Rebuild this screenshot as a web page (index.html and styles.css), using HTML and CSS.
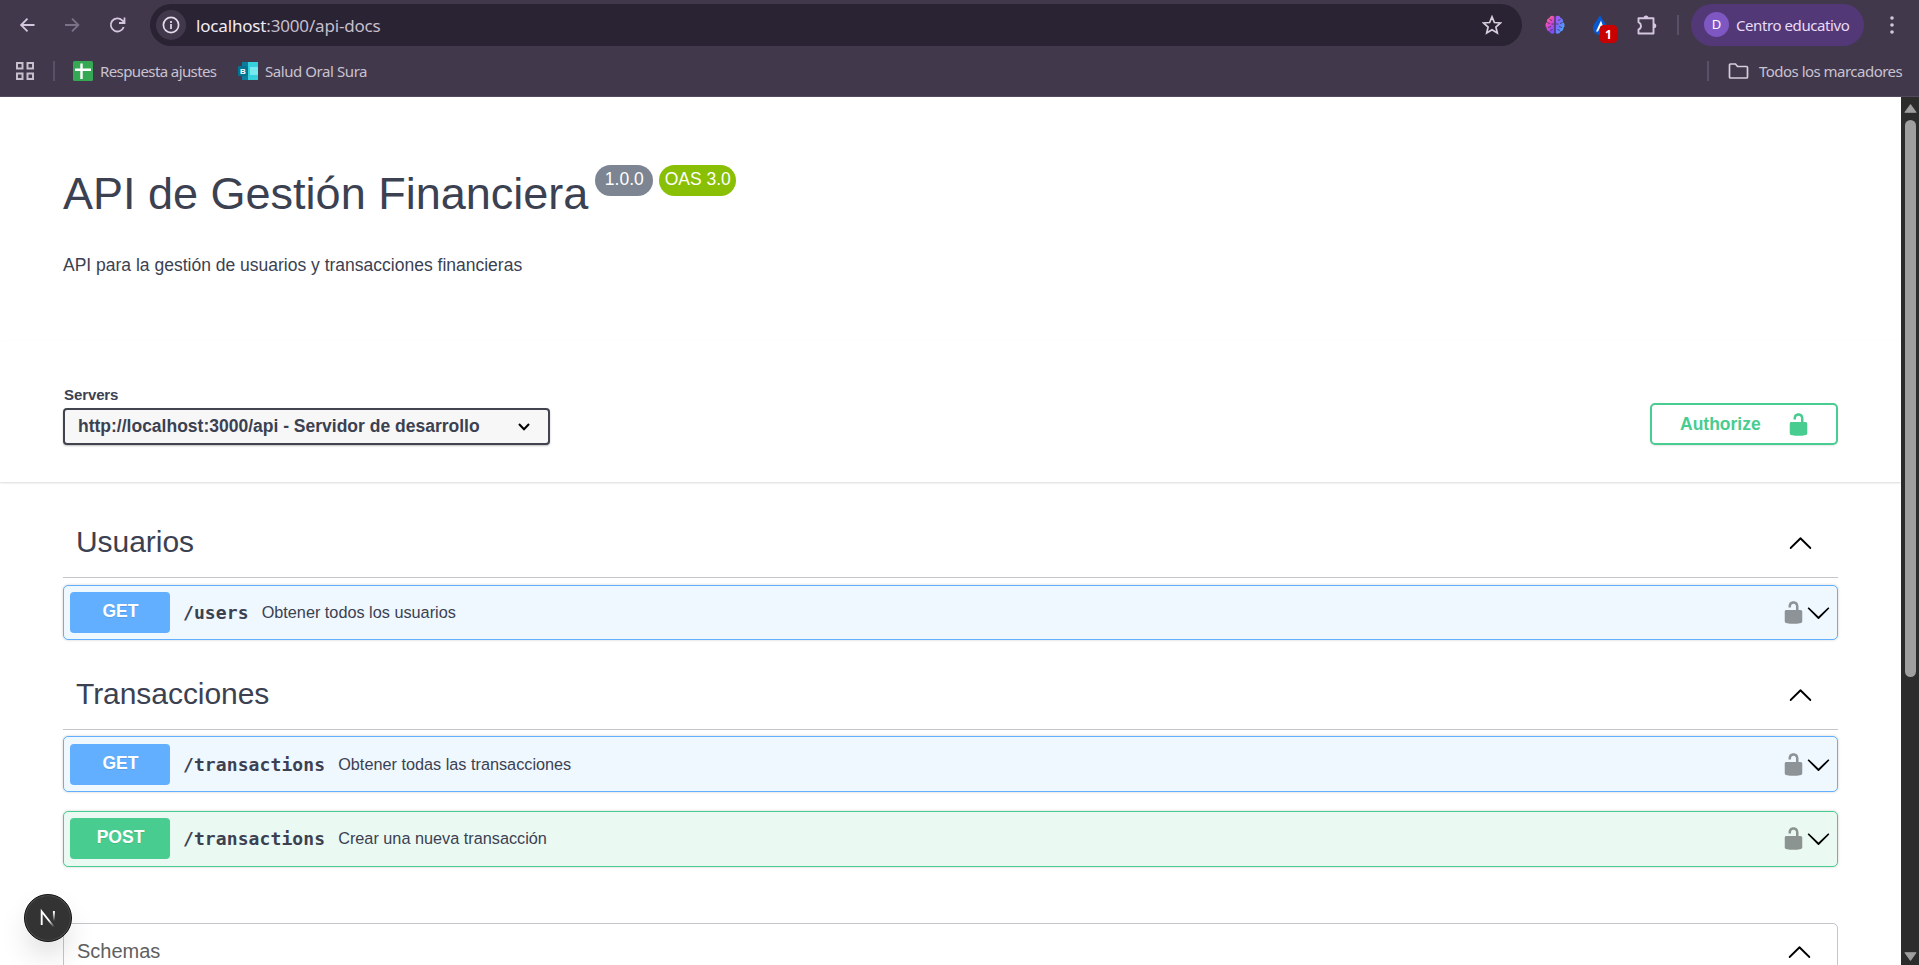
FILE: index.html
```html
<!DOCTYPE html>
<html lang="es">
<head>
<meta charset="utf-8">
<title>API de Gestión Financiera</title>
<link rel="stylesheet" href="styles.css">
</head>
<body>
<svg class="defs" width="0" height="0">
  <symbol id="unlocked" viewBox="0 0 20 20"><path d="M15.8 8H14V5.6C14 2.703 12.665 1 10 1 7.334 1 6 2.703 6 5.6V6h2v-.801C8 3.754 8.797 3 10 3c1.203 0 2 .754 2 2.199V8H4c-.553 0-1 .646-1 1.199V17c0 .549.428 1.139.951 1.307l1.197.387C5.672 18.861 6.55 19 7.1 19h5.8c.549 0 1.428-.139 1.951-.307l1.196-.387c.524-.167.953-.757.953-1.306V9.199C17 8.646 16.352 8 15.8 8z"/></symbol>
  <symbol id="up" viewBox="0 0 20 20"><path d="M17.418 14.908c.272.281.709.281.979 0s.271-.736 0-1.018l-7.908-7.83a.697.697 0 0 0-.979 0L1.603 13.89c-.271.282-.271.736 0 1.018s.709.281.979 0L10 7.767l7.418 7.141z"/></symbol>
  <symbol id="down" viewBox="0 0 20 20"><path d="M17.418 6.109c.272-.268.709-.268.979 0s.271.701 0 .969l-7.908 7.83a.697.697 0 0 1-.979 0l-7.908-7.83c-.271-.268-.271-.701 0-.969s.709-.268.979 0L10 13.25l7.418-7.141z"/></symbol>
</svg>

<header class="chrome">
  <div class="toolbar">
    <svg class="nav-icon" viewBox="0 0 20 20"><path d="M17.500 10H4M10.500 3.600 4.100 10 10.500 16.400"/></svg>
    <svg class="nav-icon dim" viewBox="0 0 20 20"><path d="M3 10h13M10 3.600 16.400 10 10 16.400"/></svg>
    <svg class="nav-icon" viewBox="0 0 20 20"><path d="M16.700 12A6.600 6.600 0 1 1 15.200 5.300L17.300 7.500M17.500 2.500V8H12"/></svg>
    <div class="address">
      <span class="info"><svg viewBox="0 0 20 20"><circle cx="10" cy="10" r="7.600"/><path d="M10 9v5M10 6v1.900"/></svg></span>
      <span class="url"><b>localhost</b>:3000/api-docs</span>
      <svg class="star" viewBox="0 0 20 20"><path d="M10 1.800 12.400 7.500 18.500 8 13.900 12 15.300 18 10 14.800 4.700 18 6.100 12 1.500 8 7.600 7.500Z"/></svg>
    </div>
    <div class="extensions">
      <svg class="brain" viewBox="0 0 20 20">
        <defs><linearGradient id="bl" x1="0" y1="0" x2=".6" y2="1"><stop offset="0" stop-color="#ff9a3c"/><stop offset=".45" stop-color="#e848c5"/><stop offset="1" stop-color="#7b4dff"/></linearGradient>
        <linearGradient id="br" x1="0" y1="0" x2="1" y2="1"><stop offset="0" stop-color="#b04dff"/><stop offset=".5" stop-color="#6a7bff"/><stop offset="1" stop-color="#35c3ff"/></linearGradient></defs>
        <path fill="url(#bl)" d="M9.300 1.500C7-.2 4.600 1 4.500 3 2.400 3.500 1.600 5.300 2.200 7 0 8.300 0 11.500 1.600 12.700 1.300 15 2.900 16.400 4.600 16.600 5.500 19 8 19.300 9.300 18Z"/>
        <path fill="url(#br)" d="M10.700 1.500C13-.2 15.400 1 15.500 3 17.600 3.500 18.400 5.300 17.800 7 20 8.300 20 11.500 18.400 12.700 18.700 15 17.100 16.400 15.400 16.600 14.500 19 12 19.300 10.700 18Z"/>
        <path class="folds" d="M2.200 7.500 5 8.500M4.500 4.500 7 5.500M3 12.500 6 11.500M9 9H6.500M5 15.500 7.500 14.500M17.800 7.500 15 8.500M15.500 4.500 13 5.500M17 12.500 14 11.500M11 9h2.500M15 15.500 12.500 14.500"/>
      </svg>
      <div class="drop">
        <svg viewBox="0 0 16 20"><path fill="#0759d1" d="M8 0C9 3 15 9 15 13a7 7 0 0 1-14 0C1 9 7 3 8 0Z"/><path fill="#fff" d="M9 5.500 12 14H9.500L8.800 11 6 16.500H4Z"/></svg>
        <span class="count">1</span>
      </div>
      <svg class="puzzle" viewBox="0 0 22 22"><path d="M3.500 4.200h15v15.300h-15v-4q2.500-1.200 2.500-3.600T3.500 8.200Z"/><path class="knob" d="M8.500 4a2.500 2.600 0 0 1 5 0ZM18.700 9.300a2.600 2.500 0 0 1 0 5Z"/></svg>
    </div>
    <span class="sep"></span>
    <div class="profile"><span class="avatar">D</span><span class="profile-name">Centro educativo</span></div>
    <svg class="dots" viewBox="0 0 6 20"><circle cx="3" cy="3" r="1.800"/><circle cx="3" cy="10" r="1.800"/><circle cx="3" cy="17" r="1.800"/></svg>
  </div>
  <div class="bookmarks">
    <svg class="apps" viewBox="0 0 18 18"><path d="M1 1h5.500v5.500H1zM11.500 1H17v5.500h-5.500zM1 11.500h5.500V17H1zM11.500 11.500H17V17h-5.500z"/></svg>
    <span class="sep first"></span>
    <svg class="sheet" viewBox="0 0 20 20"><rect width="20" height="20" rx="1.500" fill="#34a853"/><path d="M8.500 2.500V18M2 8.700h16" stroke="#fff" stroke-width="2.400"/></svg>
    <span class="mark mark-a">Respuesta ajustes</span>
    <svg class="booking" viewBox="0 0 20 18"><path fill="#0b7c9c" d="M4 0h8v18H4z"/><path fill="#35d0dc" d="M10 0h10v18H10z"/><path fill="#74eaf0" d="M12 5h8v8h-8z"/><rect y="4" width="10" height="10" rx="1" fill="#047391"/><text x="5" y="12" class="b">B</text></svg>
    <span class="mark mark-b">Salud Oral Sura</span>
    <span class="sep last"></span>
    <svg class="folder" viewBox="0 0 20 16"><path d="M1 14V2q0-1 1-1h5l2 2.500h9q1 0 1 1V14q0 1-1 1H2q-1 0-1-1Z"/></svg>
    <span class="mark mark-c">Todos los marcadores</span>
  </div>
</header>

<div class="viewport">
  <main class="page">
    <section class="info-block">
      <h1>API de Gestión Financiera</h1>
      <span class="version">1.0.0</span>
      <span class="version oas">OAS 3.0</span>
    </section>
    <p class="description">API para la gestión de usuarios y transacciones financieras</p>
    <section class="schemes">
      <div class="servers">
        <label>Servers</label>
        <div class="select"><span>http://localhost:3000/api - Servidor de desarrollo</span>
          <svg viewBox="0 0 12 8"><path d="M1 1 6 6.200 11 1"/></svg></div>
      </div>
      <div class="authorize"><span>Authorize</span><svg><use href="#unlocked"/></svg></div>
    </section>

    <section class="tag">
      <h2 class="tag-head"><span>Usuarios</span><svg><use href="#up"/></svg></h2>
      <div class="op get"><span class="method">GET</span><span class="path">/users</span><span class="summary">Obtener todos los usuarios</span><svg class="lock"><use href="#unlocked"/></svg><svg class="arrow"><use href="#down"/></svg></div>
    </section>
    <section class="tag">
      <h2 class="tag-head"><span>Transacciones</span><svg><use href="#up"/></svg></h2>
      <div class="op get tall"><span class="method">GET</span><span class="path">/transactions</span><span class="summary">Obtener todas las transacciones</span><svg class="lock"><use href="#unlocked"/></svg><svg class="arrow"><use href="#down"/></svg></div>
      <div class="op post"><span class="method">POST</span><span class="path">/transactions</span><span class="summary">Crear una nueva transacción</span><svg class="lock"><use href="#unlocked"/></svg><svg class="arrow"><use href="#down"/></svg></div>
    </section>
    <section class="models"><span>Schemas</span><svg><use href="#up"/></svg></section>
  </main>
  <aside class="scrollbar">
    <svg viewBox="0 0 12 9"><path d="M6 1 11 8H1Z"/></svg>
    <span class="thumb"></span>
    <svg viewBox="0 0 12 9"><path d="M1 1H11L6 8Z"/></svg>
  </aside>
</div>

<div class="next-badge">
  <svg viewBox="0 0 16 16">
    <defs><linearGradient id="n1" gradientUnits="userSpaceOnUse" x1="9" y1="10" x2="14" y2="17"><stop offset="0" stop-color="#fff"/><stop offset="1" stop-color="#fff" stop-opacity="0"/></linearGradient>
    <linearGradient id="n2" gradientUnits="userSpaceOnUse" x1="14" y1="0" x2="14" y2="11"><stop offset=".2" stop-color="#fff"/><stop offset="1" stop-color="#fff" stop-opacity="0"/></linearGradient></defs>
    <path d="M1.700 15V1.500L14 17" stroke="url(#n1)"/><path d="M13.900 1V11.200H13.910V1" stroke="url(#n2)"/>
  </svg>
</div>
</body>
</html>
```
FILE: styles.css
```css
* { box-sizing: border-box; }
html, body { margin: 0; height: 100%; overflow: hidden; }
body { display: flex; flex-direction: column; background: #fff; color: #3b4151; font-family: "Liberation Sans", Arial, sans-serif; }
svg { display: block; flex: none; }
.defs { position: absolute; }

.chrome { height: 97px; flex: none; background: #41384c; border-bottom: 1px solid #524a5c; color: #c9c3d0; font-family: "Noto Sans", sans-serif; }
.toolbar { display: flex; align-items: center; height: 50px; padding: 0 16px 0 17px; }
.nav-icon { width: 20px; height: 20px; margin-right: 25px; fill: none; stroke: #d5c6e0; stroke-width: 1.800; }
.nav-icon.dim { stroke: #7c7287; }
.nav-icon:nth-child(3) { margin-right: 23px; }
.address { display: flex; align-items: center; width: 1372px; height: 42px; padding: 0 20px 0 6px; border-radius: 21px; background: #2a2333; }
.info { display: flex; align-items: center; justify-content: center; width: 30px; height: 30px; border-radius: 50%; background: #41384c; }
.info svg { width: 20px; height: 20px; fill: none; stroke: #e3dce8; stroke-width: 1.700; }
.url { flex: 1; margin-left: 10px; font-size: 17px; letter-spacing: -.17px; color: #c6bfcc; white-space: nowrap; }
.url b { font-weight: 400; color: #f1ecf4; }
.star { width: 20px; height: 20px; fill: none; stroke: #d6cedb; stroke-width: 1.700; }
.extensions { display: flex; align-items: center; margin-left: 23px; }
.brain { width: 20px; height: 20px; }
.folds { fill: none; stroke: #41384c; stroke-width: .8; }
.drop { position: relative; width: 26px; height: 30px; margin-left: 27px; padding-top: 5px; }
.drop svg { width: 16px; height: 20px; }
.count { position: absolute; left: 8px; top: 15px; width: 17px; height: 18px; border-radius: 4px; background: #c80000; color: #fff; font: bold 12px/19px "Noto Sans", sans-serif; text-align: center; }
.puzzle { width: 22px; height: 22px; margin-left: 17px; fill: none; stroke: #d5c6e0; stroke-width: 1.900; stroke-linejoin: round; }
.knob { fill: #d5c6e0; stroke: none; }
.sep { width: 2px; height: 20px; background: #5b5067; margin-left: 20px; }
.profile { display: flex; align-items: center; width: 173px; height: 42px; margin: 0 0 1px 12px; padding-left: 13px; border-radius: 21px; background: #533877; }
.avatar { width: 25px; height: 25px; border-radius: 50%; background: #7e57c2; color: #fff; font-size: 13px; line-height: 25px; text-align: center; }
.profile-name { margin-left: 7px; color: #e9dcf7; font-size: 15px; letter-spacing: -.42px; white-space: nowrap; }
.dots { width: 6px; height: 20px; margin-left: 25px; fill: #d5c6e0; }

.bookmarks { display: flex; align-items: center; height: 42px; padding: 0 17px 0 16px; font-size: 15px; }
.apps { width: 18px; height: 18px; fill: none; stroke: #c7bfcc; stroke-width: 2; }
.sep.first { margin: 0 18px 0 19px; }
.sheet { width: 20px; height: 20px; }
.mark { padding-bottom: 1px; white-space: nowrap; letter-spacing: -.6px; }
.mark-a { width: 117px; margin-left: 7px; }
.booking { width: 20px; height: 18px; margin-left: 21px; }
.b { font: bold 8px "Liberation Sans", sans-serif; fill: #fff; text-anchor: middle; }
.mark-b { margin-left: 7px; letter-spacing: -.43px; }
.sep.last { margin: 0 19px 0 auto; }
.folder { width: 21px; height: 16px; fill: none; stroke: #d5cedb; stroke-width: 1.700; }
.mark-c { width: 143px; margin-left: 10px; letter-spacing: -.52px; }

.viewport { display: flex; flex: 1; min-height: 0; }
.page { flex: 1; overflow: hidden; background: #fff; }
.info-block { display: flex; align-items: flex-start; padding: 68px 63px 0; height: 149px; }
h1 { margin: 0; font-weight: 400; font-size: 45px; line-height: 58px; white-space: nowrap; }
.version { width: 58px; height: 31px; margin-left: 7px; border-radius: 16px; background: #7d8492; color: #fff; font-size: 17.500px; line-height: 29px; text-align: center; }
.version.oas { width: 77px; margin-left: 6px; background: #89bf04; }
.description { margin: 0; padding: 8px 63px 0; font-size: 17.500px; line-height: 22px; height: 95px; }
.schemes { display: flex; justify-content: space-between; align-items: flex-start; height: 141px; padding: 44px 63px 0; background: #fff; box-shadow: 0 1px 2px rgba(0,0,0,.15); }
label { display: block; padding-left: 1px; height: 23px; font-weight: 700; font-size: 15px; line-height: 19px; letter-spacing: -.1px; }
.servers { width: 487px; }
.select { display: flex; align-items: center; justify-content: space-between; height: 37px; padding: 0 18px 0 13px; border: 2px solid #41444e; border-radius: 4px; background: #f7f7f7; box-shadow: 0 1px 2px rgba(0,0,0,.25); font-weight: 700; font-size: 17.500px; white-space: nowrap; }
.select svg { width: 12px; height: 8px; fill: none; stroke: #000; stroke-width: 2; }
.authorize { display: flex; align-items: center; width: 188px; height: 42px; margin-top: 18px; padding-left: 28px; border: 2px solid #49cc90; border-radius: 5px; color: #49cc90; font-weight: 700; font-size: 17.500px; box-shadow: 0 1px 2px rgba(0,0,0,.1); }
.authorize span { width: 106px; }
.authorize svg { width: 25px; height: 25px; fill: #49cc90; }

.tag { padding: 0 63px; }
.tag-head { display: flex; align-items: center; justify-content: space-between; height: 71px; margin: 25px 0 7px; padding: 0 25px 0 13px; border-bottom: 1px solid #c5c6ca; font-size: 30px; font-weight: 400; letter-spacing: -.05px; }
.tag-head svg { width: 25px; height: 25px; }
.tag + .tag .tag-head { margin-top: 19px; margin-bottom: 6px; }
.op { display: flex; align-items: center; height: 55px; padding: 0 6px; border: 1px solid #61affe; border-radius: 5px; background: #eff7ff; box-shadow: 0 0 3px rgba(0,0,0,.19); }
.op.tall { height: 56px; padding-top: 1px; }
.op.post { height: 56px; padding-bottom: 1px; margin-top: 19px; border-color: #49cc90; background: #ebf9f3; }
.method { width: 100px; height: 41px; padding-left: 1px; border-radius: 4px; background: #61affe; color: #fff; font-size: 17.500px; font-weight: 700; line-height: 39px; text-align: center; text-shadow: 0 1px 0 rgba(0,0,0,.1); }
.post .method { background: #49cc90; }
.path { margin-left: 13px; font: bold 18px "DejaVu Sans Mono", monospace; letter-spacing: .1px; }
.summary { flex: 1; margin-left: 13px; padding-bottom: 1px; font-size: 16.250px; }
.lock { width: 25px; height: 25px; fill: #000; opacity: .4; }
.arrow { width: 25px; height: 25px; }
.models { display: flex; justify-content: space-between; align-items: flex-start; height: 80px; margin: 56px 63px 0; padding: 15px 25px 0 13px; border: 1px solid #c4c6ca; border-radius: 5px; color: #606060; font-size: 20px; line-height: 24px; }
.models svg { width: 25px; height: 25px; fill: #000; }

.scrollbar { display: flex; flex-direction: column; align-items: center; width: 18px; padding: 6px 0 3px; background: #2c2c2c; }
.scrollbar svg { width: 13px; height: 11px; fill: #9f9f9f; stroke: #9f9f9f; stroke-linejoin: round; }
.thumb { width: 11px; height: 557px; margin: 6px 0 auto; border-radius: 6px; background: #9f9f9f; }

.next-badge { position: absolute; left: 23.500px; top: 894px; width: 48px; height: 48px; display: flex; align-items: center; justify-content: center; border: 1px solid #111; border-radius: 50%; background: #333; box-shadow: inset 0 0 0 1px #4b4b4b, 0 16px 32px -8px rgba(0,0,0,.24); }
.next-badge svg { width: 16px; height: 16px; fill: none; stroke-width: 1.900; overflow: visible; }
```
